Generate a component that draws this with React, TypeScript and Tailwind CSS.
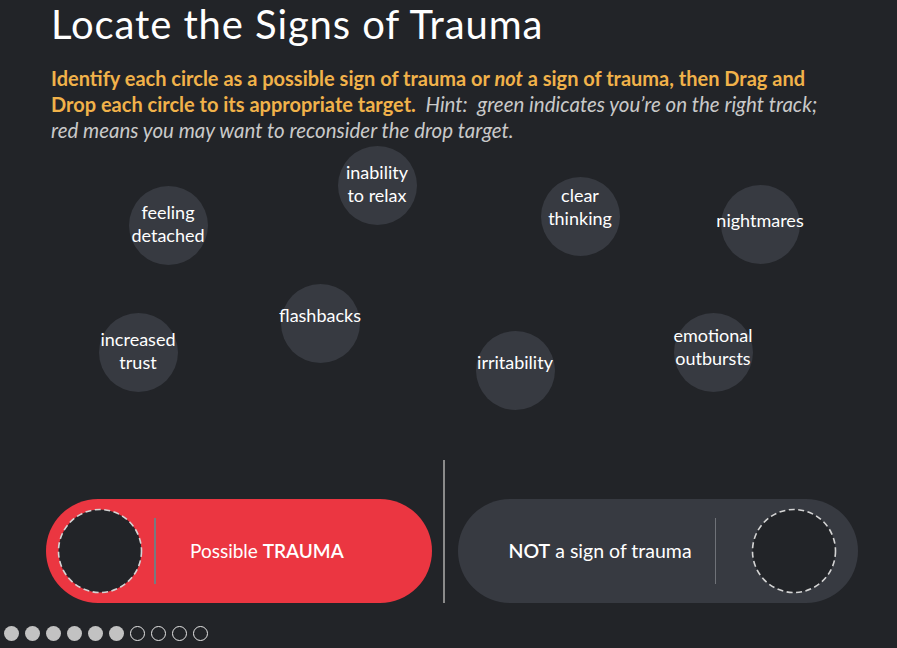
import React from "react";

type Sign = {
  lines: string[];
  x: number;
  y: number;
  shift: string;
};

// circle centres taken from the layout, diameter 79
const signs: Sign[] = [
  { lines: ["feeling", "detached"], x: 168, y: 225, shift: "pb-[2px]" },
  { lines: ["inability", "to relax"], x: 377, y: 185, shift: "pb-[3px]" },
  { lines: ["clear", "thinking"], x: 580, y: 216, shift: "pb-[18px]" },
  { lines: ["nightmares"], x: 760, y: 224, shift: "pb-[8px]" },
  { lines: ["flashbacks"], x: 320, y: 323, shift: "pb-[16px]" },
  { lines: ["increased", "trust"], x: 138, y: 352, shift: "pb-[2px]" },
  { lines: ["irritability"], x: 515, y: 370, shift: "pb-[16px]" },
  { lines: ["emotional", "outbursts"], x: 713, y: 352, shift: "pb-[11px]" },
];

const AREA_TOP = 143;

function SignCircle({ sign }: { sign: Sign }) {
  return (
    <div
      className={`absolute w-[79px] h-[79px] rounded-full bg-[#373a41] flex flex-col items-center justify-center text-white text-[18px] leading-[23px] text-center ${sign.shift}`}
      style={{ left: sign.x - 39.5, top: sign.y - 39.5 - AREA_TOP }}
    >
      {sign.lines.map((l) => (
        <span key={l} className="whitespace-nowrap">
          {l}
        </span>
      ))}
    </div>
  );
}

function DropSlot() {
  return (
    <svg width="86" height="86" viewBox="0 0 86 86" className="shrink-0">
      <circle
        cx="43"
        cy="43"
        r="41.5"
        fill="#222428"
        stroke="#d4d4d4"
        strokeWidth="1.6"
        strokeDasharray="6 3.5"
      />
    </svg>
  );
}

export default function App() {
  return (
    <div
      className="w-[897px] h-[648px] bg-[#222428] overflow-hidden flex flex-col"
      style={{ fontFamily: "Lato, 'Open Sans', sans-serif" }}
    >
      {/* Header */}
      <div className="pl-[51px] h-[143px] shrink-0">
        <h1 className="text-[40px] leading-[48px] tracking-[0.9px] font-normal text-white">
          Locate the Signs of Trauma
        </h1>
        <p className="mt-[17px] text-[20px] leading-[26px] whitespace-nowrap">
          <span className="font-bold text-[#f1b24a]">
            Identify each circle as a possible sign of trauma or <i>not</i> a sign of trauma, then Drag and
            <br />
            Drop each circle to its appropriate target.
          </span>
          <span className="italic text-[#c9c9c9] text-[20.5px] leading-[26px]">
            {"\u00a0\u00a0Hint:\u00a0\u00a0green indicates you\u2019re on the right track;"}
            <br />
            red means you may want to reconsider the drop target.
          </span>
        </p>
      </div>

      {/* Draggable circles */}
      <div className="relative h-[317px] shrink-0">
        {signs.map((s) => (
          <SignCircle key={s.lines.join(" ")} sign={s} />
        ))}
      </div>

      {/* Drop targets */}
      <div className="flex items-end pl-[46px] shrink-0">
        <div className="w-[386px] h-[104px] rounded-full bg-[#eb3641] flex items-center pl-[11px] shrink-0">
          <DropSlot />
          <div className="w-[2px] h-[66px] bg-[#777a80] ml-[11px]" />
          <div className="ml-[34px] text-white text-[19px] whitespace-nowrap">
            Possible <span className="font-semibold">TRAUMA</span>
          </div>
        </div>
        <div className="w-[1.5px] h-[143px] bg-[#8a8a8a] ml-[11px]" />
        <div className="w-[400px] h-[104px] rounded-full bg-[#373a41] flex items-center pl-[51px] ml-[13px] shrink-0">
          <div className="w-[184px] text-white text-[19.5px] whitespace-nowrap">
            <span className="font-semibold">NOT</span> a sign of trauma
          </div>
          <div className="w-[1px] h-[66px] bg-[#6f7278] ml-[22px]" />
          <div className="ml-[35px]">
            <DropSlot />
          </div>
        </div>
      </div>

      {/* Progress dots */}
      <div className="flex gap-[6px] pl-[4px] mt-[23px]">
        {Array.from({ length: 10 }).map((_, i) =>
          i < 6 ? (
            <div key={i} className="w-[15px] h-[15px] rounded-full bg-[#c2c2c2]" />
          ) : (
            <div key={i} className="w-[15px] h-[15px] rounded-full border-[1.5px] border-[#e6e6e6]" />
          )
        )}
      </div>
    </div>
  );
}
